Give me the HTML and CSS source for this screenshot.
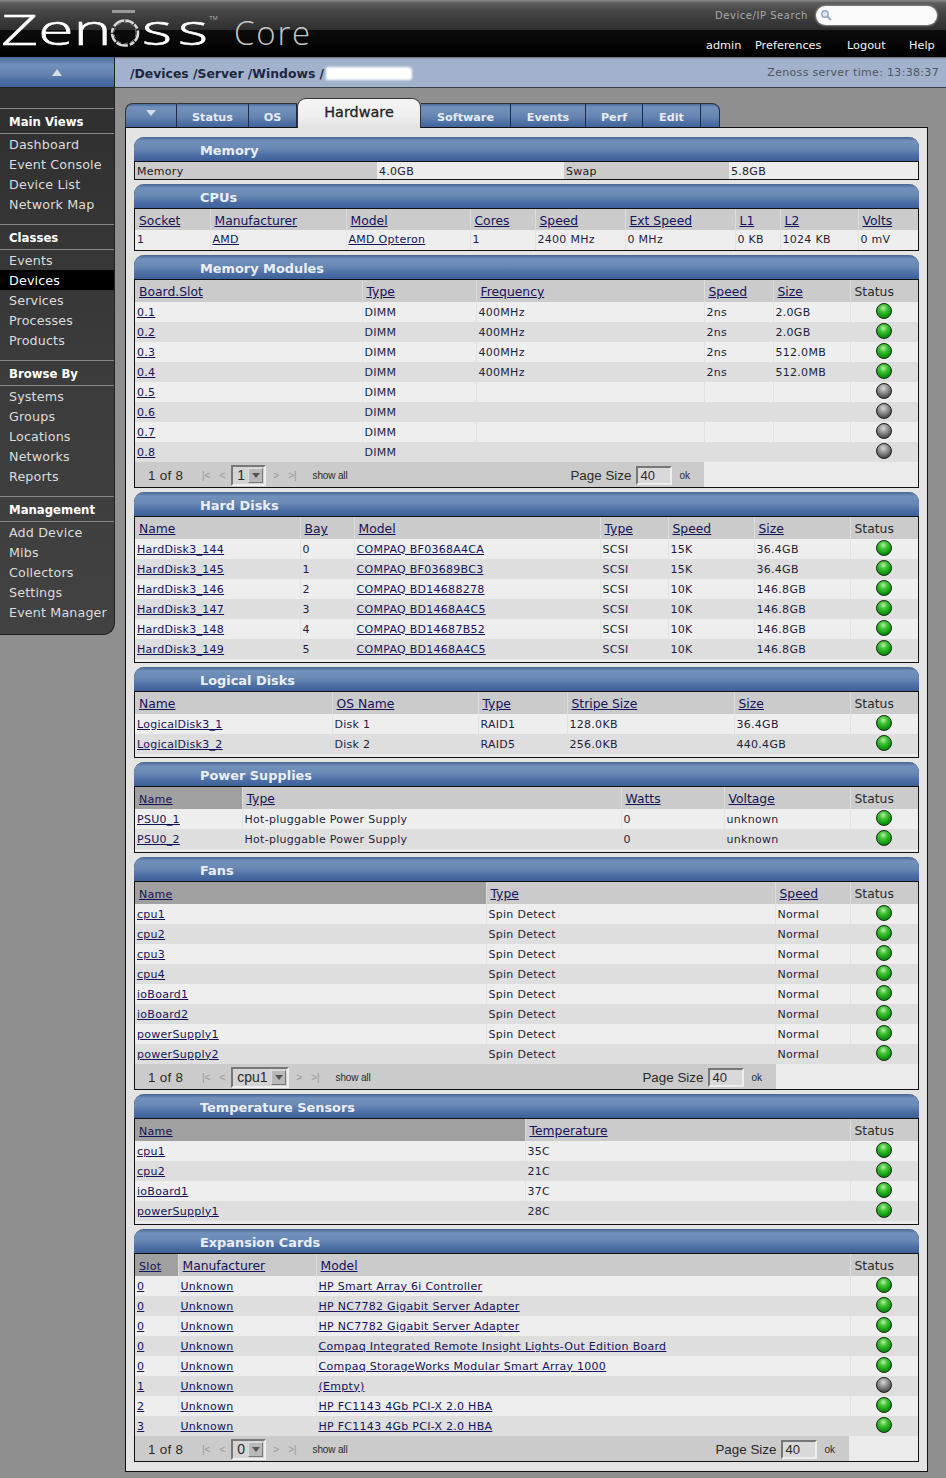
FILE: index.html
```html
<!DOCTYPE html>
<html lang="en">
<head>
<meta charset="utf-8">
<title>Zenoss Core</title>
<link rel="stylesheet" href="styles.css">
</head>
<body>
<header class="top">
  <div class="logo">
    <span class="zen">Zen<span class="zen-o">o</span><span class="zen-s">ss</span></span>
    <svg class="ring" width="34" height="42" viewBox="0 0 34 42"><rect x="3" y="1" width="23" height="3" fill="#9a9a9a"/><ellipse cx="16" cy="24" rx="13" ry="12.5" fill="none" stroke="#d8d8d8" stroke-width="2.6" stroke-dasharray="9 1 5 2 12 1"/><ellipse cx="16" cy="24" rx="11" ry="10.5" fill="none" stroke="#777" stroke-width="1" stroke-dasharray="4 3"/></svg>
    <sup class="tm">TM</sup>
    <span class="core">Core</span>
  </div>
  <div class="top-right">
    <div class="search"><span class="search-label">Device/IP Search</span><span class="search-box"><svg width="12" height="12" viewBox="0 0 12 12"><circle cx="5" cy="5" r="3.2" fill="#dde6f2" stroke="#8fa6c4" stroke-width="1.4"/><path d="M7.5 7.5 11 11" stroke="#8fa6c4" stroke-width="1.8"/></svg></span></div>
    <nav class="user"><a class="u1">admin</a><a class="u2">Preferences</a><a class="u3">Logout</a><a class="u4">Help</a></nav>
  </div>
</header>
<div class="layout">
  <aside class="side">
    <div class="side-top"><span class="tri-up"></span></div>
    <div class="side-body">
      <h3>Main Views</h3>
      <ul><li>Dashboard</li><li>Event Console</li><li>Device List</li><li>Network Map</li></ul>
      <h3>Classes</h3>
      <ul><li>Events</li><li class="on">Devices</li><li>Services</li><li>Processes</li><li>Products</li></ul>
      <h3>Browse By</h3>
      <ul><li>Systems</li><li>Groups</li><li>Locations</li><li>Networks</li><li>Reports</li></ul>
      <h3>Management</h3>
      <ul><li>Add Device</li><li>Mibs</li><li>Collectors</li><li>Settings</li><li>Event Manager</li></ul>
    </div>
  </aside>
  <main class="main">
    <div class="crumb"><span class="path">/Devices /Server /Windows /</span><span class="smudge"></span><span class="time">Zenoss server time: 13:38:37</span></div>
    <div class="tabs">
      <span class="tab t0"><span class="tri-down"></span></span>
      <span class="tab t1">Status</span>
      <span class="tab t2">OS</span>
      <span class="tab active">Hardware</span>
      <span class="tab t4">Software</span>
      <span class="tab t5">Events</span>
      <span class="tab t6">Perf</span>
      <span class="tab t7">Edit</span>
      <span class="tab t8"></span>
    </div>
    <div class="panel">

      <section class="box">
        <h2>Memory</h2>
        <div class="mem"><span class="lab m1">Memory</span><span class="m2">4.0GB</span><span class="lab m3">Swap</span><span class="m4">5.8GB</span></div>
      </section>

      <section class="box">
        <h2>CPUs</h2>
        <table class="cpu">
          <thead><tr><th class="c1"><a>Socket</a></th><th class="c2"><a>Manufacturer</a></th><th class="c3"><a>Model</a></th><th class="c4"><a>Cores</a></th><th class="c5"><a>Speed</a></th><th class="c6"><a>Ext Speed</a></th><th class="c7"><a>L1</a></th><th class="c8"><a>L2</a></th><th><a>Volts</a></th></tr></thead>
          <tbody><tr><td>1</td><td><a>AMD</a></td><td><a>AMD Opteron</a></td><td>1</td><td>2400 MHz</td><td>0 MHz</td><td>0 KB</td><td>1024 KB</td><td>0 mV</td></tr></tbody>
        </table>
      </section>

      <section class="box">
        <h2>Memory Modules</h2>
        <table class="mods">
          <thead><tr><th class="c1"><a>Board.Slot</a></th><th class="c2"><a>Type</a></th><th class="c3"><a>Frequency</a></th><th class="c4"><a>Speed</a></th><th class="c5"><a>Size</a></th><th class="st">Status</th></tr></thead>
          <tbody>
            <tr><td><a>0.1</a></td><td>DIMM</td><td>400MHz</td><td>2ns</td><td>2.0GB</td><td class="st"><span class="ball"></span></td></tr>
            <tr><td><a>0.2</a></td><td>DIMM</td><td>400MHz</td><td>2ns</td><td>2.0GB</td><td class="st"><span class="ball"></span></td></tr>
            <tr><td><a>0.3</a></td><td>DIMM</td><td>400MHz</td><td>2ns</td><td>512.0MB</td><td class="st"><span class="ball"></span></td></tr>
            <tr><td><a>0.4</a></td><td>DIMM</td><td>400MHz</td><td>2ns</td><td>512.0MB</td><td class="st"><span class="ball"></span></td></tr>
            <tr><td><a>0.5</a></td><td>DIMM</td><td></td><td></td><td></td><td class="st"><span class="ball off"></span></td></tr>
            <tr><td><a>0.6</a></td><td>DIMM</td><td></td><td></td><td></td><td class="st"><span class="ball off"></span></td></tr>
            <tr><td><a>0.7</a></td><td>DIMM</td><td></td><td></td><td></td><td class="st"><span class="ball off"></span></td></tr>
            <tr><td><a>0.8</a></td><td>DIMM</td><td></td><td></td><td></td><td class="st"><span class="ball off"></span></td></tr>
          </tbody>
        </table>
        <div class="pager p-mods">
          <span class="count">1 of 8</span><span class="nav"><i>|&lt;</i><i>&lt;</i></span><span class="sel s-short"><b>1</b><em></em></span><span class="nav"><i>&gt;</i><i>&gt;|</i></span><span class="all">show all</span>
          <span class="size">Page Size<span class="inp">40</span><span class="ok">ok</span></span>
        </div>
      </section>

      <section class="box pad">
        <h2>Hard Disks</h2>
        <table class="disks">
          <thead><tr><th class="c1"><a>Name</a></th><th class="c2"><a>Bay</a></th><th class="c3"><a>Model</a></th><th class="c4"><a>Type</a></th><th class="c5"><a>Speed</a></th><th class="c6"><a>Size</a></th><th class="st">Status</th></tr></thead>
          <tbody>
            <tr><td><a>HardDisk3_144</a></td><td>0</td><td><a>COMPAQ BF0368A4CA</a></td><td>SCSI</td><td>15K</td><td>36.4GB</td><td class="st"><span class="ball"></span></td></tr>
            <tr><td><a>HardDisk3_145</a></td><td>1</td><td><a>COMPAQ BF03689BC3</a></td><td>SCSI</td><td>15K</td><td>36.4GB</td><td class="st"><span class="ball"></span></td></tr>
            <tr><td><a>HardDisk3_146</a></td><td>2</td><td><a>COMPAQ BD14688278</a></td><td>SCSI</td><td>10K</td><td>146.8GB</td><td class="st"><span class="ball"></span></td></tr>
            <tr><td><a>HardDisk3_147</a></td><td>3</td><td><a>COMPAQ BD1468A4C5</a></td><td>SCSI</td><td>10K</td><td>146.8GB</td><td class="st"><span class="ball"></span></td></tr>
            <tr><td><a>HardDisk3_148</a></td><td>4</td><td><a>COMPAQ BD14687B52</a></td><td>SCSI</td><td>10K</td><td>146.8GB</td><td class="st"><span class="ball"></span></td></tr>
            <tr><td><a>HardDisk3_149</a></td><td>5</td><td><a>COMPAQ BD1468A4C5</a></td><td>SCSI</td><td>10K</td><td>146.8GB</td><td class="st"><span class="ball"></span></td></tr>
          </tbody>
        </table>
      </section>

      <section class="box pad">
        <h2>Logical Disks</h2>
        <table class="logical">
          <thead><tr><th class="c1"><a>Name</a></th><th class="c2"><a>OS Name</a></th><th class="c3"><a>Type</a></th><th class="c4"><a>Stripe Size</a></th><th class="c5"><a>Size</a></th><th class="st">Status</th></tr></thead>
          <tbody>
            <tr><td><a>LogicalDisk3_1</a></td><td>Disk 1</td><td>RAID1</td><td>128.0KB</td><td>36.4GB</td><td class="st"><span class="ball"></span></td></tr>
            <tr><td><a>LogicalDisk3_2</a></td><td>Disk 2</td><td>RAID5</td><td>256.0KB</td><td>440.4GB</td><td class="st"><span class="ball"></span></td></tr>
          </tbody>
        </table>
      </section>

      <section class="box pad">
        <h2>Power Supplies</h2>
        <table class="power">
          <thead><tr><th class="c1 sorted"><a>Name</a></th><th class="c2"><a>Type</a></th><th class="c3"><a>Watts</a></th><th class="c4"><a>Voltage</a></th><th class="st">Status</th></tr></thead>
          <tbody>
            <tr><td><a>PSU0_1</a></td><td>Hot-pluggable Power Supply</td><td>0</td><td>unknown</td><td class="st"><span class="ball"></span></td></tr>
            <tr><td><a>PSU0_2</a></td><td>Hot-pluggable Power Supply</td><td>0</td><td>unknown</td><td class="st"><span class="ball"></span></td></tr>
          </tbody>
        </table>
      </section>

      <section class="box">
        <h2>Fans</h2>
        <table class="fans">
          <thead><tr><th class="c1 sorted"><a>Name</a></th><th class="c2"><a>Type</a></th><th class="c3"><a>Speed</a></th><th class="st">Status</th></tr></thead>
          <tbody>
            <tr><td><a>cpu1</a></td><td>Spin Detect</td><td>Normal</td><td class="st"><span class="ball"></span></td></tr>
            <tr><td><a>cpu2</a></td><td>Spin Detect</td><td>Normal</td><td class="st"><span class="ball"></span></td></tr>
            <tr><td><a>cpu3</a></td><td>Spin Detect</td><td>Normal</td><td class="st"><span class="ball"></span></td></tr>
            <tr><td><a>cpu4</a></td><td>Spin Detect</td><td>Normal</td><td class="st"><span class="ball"></span></td></tr>
            <tr><td><a>ioBoard1</a></td><td>Spin Detect</td><td>Normal</td><td class="st"><span class="ball"></span></td></tr>
            <tr><td><a>ioBoard2</a></td><td>Spin Detect</td><td>Normal</td><td class="st"><span class="ball"></span></td></tr>
            <tr><td><a>powerSupply1</a></td><td>Spin Detect</td><td>Normal</td><td class="st"><span class="ball"></span></td></tr>
            <tr><td><a>powerSupply2</a></td><td>Spin Detect</td><td>Normal</td><td class="st"><span class="ball"></span></td></tr>
          </tbody>
        </table>
        <div class="pager p-fans">
          <span class="count">1 of 8</span><span class="nav"><i>|&lt;</i><i>&lt;</i></span><span class="sel s-long"><b>cpu1</b><em></em></span><span class="nav"><i>&gt;</i><i>&gt;|</i></span><span class="all">show all</span>
          <span class="size">Page Size<span class="inp">40</span><span class="ok">ok</span></span>
        </div>
      </section>

      <section class="box pad">
        <h2>Temperature Sensors</h2>
        <table class="temp">
          <thead><tr><th class="c1 sorted"><a>Name</a></th><th class="c2"><a>Temperature</a></th><th class="st">Status</th></tr></thead>
          <tbody>
            <tr><td><a>cpu1</a></td><td>35C</td><td class="st"><span class="ball"></span></td></tr>
            <tr><td><a>cpu2</a></td><td>21C</td><td class="st"><span class="ball"></span></td></tr>
            <tr><td><a>ioBoard1</a></td><td>37C</td><td class="st"><span class="ball"></span></td></tr>
            <tr><td><a>powerSupply1</a></td><td>28C</td><td class="st"><span class="ball"></span></td></tr>
          </tbody>
        </table>
      </section>

      <section class="box">
        <h2>Expansion Cards</h2>
        <table class="cards">
          <thead><tr><th class="c1 sorted"><a>Slot</a></th><th class="c2"><a>Manufacturer</a></th><th class="c3"><a>Model</a></th><th class="st">Status</th></tr></thead>
          <tbody>
            <tr><td><a>0</a></td><td><a>Unknown</a></td><td><a>HP Smart Array 6i Controller</a></td><td class="st"><span class="ball"></span></td></tr>
            <tr><td><a>0</a></td><td><a>Unknown</a></td><td><a>HP NC7782 Gigabit Server Adapter</a></td><td class="st"><span class="ball"></span></td></tr>
            <tr><td><a>0</a></td><td><a>Unknown</a></td><td><a>HP NC7782 Gigabit Server Adapter</a></td><td class="st"><span class="ball"></span></td></tr>
            <tr><td><a>0</a></td><td><a>Unknown</a></td><td><a>Compaq Integrated Remote Insight Lights-Out Edition Board</a></td><td class="st"><span class="ball"></span></td></tr>
            <tr><td><a>0</a></td><td><a>Unknown</a></td><td><a>Compaq StorageWorks Modular Smart Array 1000</a></td><td class="st"><span class="ball"></span></td></tr>
            <tr><td><a>1</a></td><td><a>Unknown</a></td><td><a>(Empty)</a></td><td class="st"><span class="ball off"></span></td></tr>
            <tr><td><a>2</a></td><td><a>Unknown</a></td><td><a>HP FC1143 4Gb PCI-X 2.0 HBA</a></td><td class="st"><span class="ball"></span></td></tr>
            <tr><td><a>3</a></td><td><a>Unknown</a></td><td><a>HP FC1143 4Gb PCI-X 2.0 HBA</a></td><td class="st"><span class="ball"></span></td></tr>
          </tbody>
        </table>
        <div class="pager p-cards">
          <span class="count">1 of 8</span><span class="nav"><i>|&lt;</i><i>&lt;</i></span><span class="sel s-short"><b>0</b><em></em></span><span class="nav"><i>&gt;</i><i>&gt;|</i></span><span class="all">show all</span>
          <span class="size">Page Size<span class="inp">40</span><span class="ok">ok</span></span>
        </div>
      </section>

    </div>
  </main>
</div>
</body>
</html>
```
FILE: styles.css
```css
* { box-sizing: border-box; }
html, body { margin: 0; padding: 0; }
body {
  width: 946px;
  height: 1478px;
  overflow: hidden;
  background: #8f8f8f;
  font-family: "DejaVu Sans", Verdana, sans-serif;
  font-size: 11px;
  color: #1e1e3c;
}

/* Header */
.top {
  height: 57px;
  display: flex;
  justify-content: space-between;
  background: linear-gradient(#8a8a8a 0, #5c5c5c 3px, #454545 12px, #2e2e2e 30px, #0c0c0c 30px, #000 57px);
  position: relative;
}
.logo { position: relative; width: 330px; height: 57px; }
.zen {
  position: absolute; left: 1px; top: 6px;
  font-family: "Open Sans", sans-serif; font-weight: 300; font-size: 43px; line-height: 46px;
  color: #fff;
  -webkit-text-stroke: .55px #fff;
  transform: scaleX(1.5); transform-origin: left;
}
.zen-o { color: transparent; -webkit-text-stroke: 0; letter-spacing: -5px; }
.zen-s { letter-spacing: 4px; }
.ring { position: absolute; left: 109px; top: 9px; }
.tm { position: absolute; left: 209px; top: 14px; margin: 0; font-size: 6px; line-height: 8px; color: #aaa; font-family: "Liberation Sans", sans-serif; }
.core {
  position: absolute; left: 234px; top: 13px;
  font-family: "Open Sans", sans-serif; font-weight: 300; font-size: 33px; line-height: 40px; color: #c4c4c4;
  letter-spacing: 1.8px;
}
.top-right { width: 232px; display: flex; flex-direction: column; }
.search { display: flex; align-items: center; height: 30px; padding-left: 1px; padding-top: 0; }
.search-label { width: 101px; color: #a8a8a8; font-size: 10px; letter-spacing: .55px; white-space: nowrap; }
.search-box {
  width: 121px; height: 19px; border-radius: 10px; background: #fafafa;
  box-shadow: 0 0 2px 1px #888; padding: 2px 4px; display: flex; align-items: center;
}
.user { position: relative; height: 27px; color: #f4f4f4; font-size: 11.3px; }
.user a { position: absolute; top: 9px; white-space: nowrap; }
.u1 { left: -8px; } .u2 { left: 41px; } .u3 { left: 133px; } .u4 { left: 195px; }

/* Layout */
.layout { display: flex; align-items: flex-start; }
.side { width: 115px; flex: none; }
.side-top {
  height: 31px; display: flex; align-items: center; justify-content: center;
  background: linear-gradient(#4a6a9a 0, #7190bb 8px, #6381ad 18px, #4a6ca3 24px, #3f6199 30px);
  border-right: 1px solid #222;
  border-bottom: 1px solid #222;
}
.tri-up { width: 0; height: 0; border: 5.5px solid transparent; border-top: 0; border-bottom: 7px solid #d8dde6; }
.side-body {
  height: 547px; padding-top: 20px;
  background: linear-gradient(#2f2f2f, #3b3b3b 50%, #424242);
  border-radius: 0 0 12px 0;
  border-right: 1px solid #222;
  border-bottom: 1px solid #222;
  color: #e6e6e6;
}
.side-body h3 {
  margin: 0; height: 26px; padding: 5px 0 0 9px;
  border-top: 1px solid #888; border-bottom: 1px solid #888;
  font-size: 11.7px; line-height: 16px; font-weight: bold; color: #fff;
}
.side-body ul { list-style: none; margin: 0 0 10px; padding: 0; }
.side-body li { height: 20px; padding-left: 9px; font-size: 12.7px; letter-spacing: .15px; line-height: 22px; white-space: nowrap; color: #dcdcdc; }
.side-body li.on { background: #000; color: #fff; }

/* Breadcrumb */
.main { flex: 1; min-width: 0; }
.crumb {
  height: 31px; display: flex; align-items: center; padding: 0 7px 0 15px;
  background: #a2b2cc;
  border-bottom: 1px solid #3a3f48;
  box-shadow: inset 0 3px 2px -2px #666;
}
.path { font-weight: bold; font-size: 12.4px; padding-top: 2px; color: #1d2740; white-space: nowrap; }
.smudge { width: 86px; height: 13px; margin: 3px 0 0 2px; background: #fff; border-radius: 2px 4px 3px 1px; filter: blur(1px); }
.time { margin-left: auto; font-size: 11px; letter-spacing: .32px; color: #4f5561; white-space: nowrap; }

/* Tabs */
.tabs { display: flex; align-items: flex-end; height: 39px; padding: 0 0 0 10px; }
.tab {
  height: 24px; display: flex; align-items: center; justify-content: center;
  background: linear-gradient(#4a6a9a 0, #7190bb 3px, #6786b1 12px, #4a6ca3 20px, #3f6199 24px);
  border-top: 1px solid #333; border-right: 1px solid #1d2b44;
  color: #e6ebf2; font-weight: bold; font-size: 11.2px; padding-top: 3px;
  margin-bottom: 0;
}
.t0 { width: 52px; border-left: 1px solid #333; border-radius: 8px 0 0 0; padding-top: 0; padding-bottom: 1px; }
.t1 { width: 72px; } .t2 { width: 48px; }
.t4 { width: 90px; } .t5 { width: 75px; } .t6 { width: 57px; } .t7 { width: 58px; }
.t8 { width: 19px; border-radius: 0 8px 0 0; }
.tab.active {
  width: 124px; height: 30px; padding: 0 0 4px; position: relative; top: 1px;
  background: linear-gradient(#f4f4f4, #f0f0f0 55%, #e2e2e2);
  border: 1px solid #333; border-bottom: 0; border-radius: 9px 9px 0 0;
  color: #222; font-weight: normal; font-size: 14.4px; letter-spacing: 0;
  -webkit-text-stroke: .3px #222;
}
.tri-down { width: 0; height: 0; border: 5.5px solid transparent; border-bottom: 0; border-top: 6px solid #d8dde6; margin-bottom: 5px; }

/* Panel */
.panel {
  width: 803px; margin-left: 10px;
  padding: 9px 8px 9px;
  background: #e4e4e4;
  border: 1px solid #111;
  display: flex; flex-direction: column; gap: 4px;
}
.box {
  width: 785px; border: 1px solid #111; border-top: 0; border-radius: 10px 10px 0 0;
  background: #ebebeb;
}
.box.pad { padding-bottom: 3px; }
.box h2 {
  margin: 0 -1px; height: 25px; padding: 3px 0 0 66px;
  font-size: 12.9px; line-height: 22px; font-weight: bold; color: #eaeff6;
  background: linear-gradient(#45648f 0, #7190bb 4px, #6a89b4 11px, #4d6fa6 18px, #3e6099 24px, #111 24px, #111 25px);
  border-radius: 10px 10px 0 0;
}

/* Memory row */
.mem { display: flex; height: 17px; line-height: 19px; background: #ececec; letter-spacing: .28px; }
.mem .lab { background: #cbcbcb; }
.mem span { padding-left: 2px; color: #222; }
.m1 { width: 242px; } .m2 { width: 187px; } .m3 { width: 165px; } .m4 { flex: 1; }

/* Tables */
table { width: 783px; table-layout: fixed; border-collapse: collapse; }
th {
  height: 22px; padding: 2px 0 0 4px; text-align: left; font-weight: normal;
  font-size: 12.35px; background: #cbcbcb; color: #2a2a2a;
  border-left: 1px solid #dcdcdc; white-space: nowrap;
}
th:first-child { border-left: 0; }
th a, td a { color: #14145a; text-decoration: underline; }
td {
  height: 20px; padding: 0 0 0 2px; font-size: 11px; letter-spacing: .28px;
  border-left: 1px solid #e2e2e2; white-space: nowrap; overflow: hidden;
}
td:first-child { border-left: 0; }
tbody tr:nth-child(odd) { background: #eeeeee; }
tbody tr:nth-child(even) { background: #dedede; }
tbody tr:nth-child(even) td { border-left-color: #dedede; }
th.sorted { background: #a0a0a0; font-size: 11px; letter-spacing: .3px; }
td.st { padding: 0; text-align: center; }
.cpu th { height: 21px; }
.cpu td { padding-bottom: 2px; }
.ball {
  display: block; width: 16px; height: 16px; margin: -2px auto 0; border-radius: 50%;
  background: radial-gradient(circle at 45% 30%, #b9f0a8 0, #43c535 30%, #0e9a10 65%, #065c08 100%);
  border: 1px solid #1b2b1b;
}
.ball.off { background: radial-gradient(circle at 45% 30%, #d8d8d8 0, #8c8c8c 40%, #555 70%, #333 100%); border-color: #222; }

.cpu .c1 { width: 75px; } .cpu .c2 { width: 136px; } .cpu .c3 { width: 124px; } .cpu .c4 { width: 65px; }
.cpu .c5 { width: 90px; } .cpu .c6 { width: 110px; } .cpu .c7 { width: 45px; } .cpu .c8 { width: 78px; }
.mods .c1 { width: 227px; } .mods .c2 { width: 114px; } .mods .c3 { width: 228px; } .mods .c4 { width: 69px; } .mods .c5 { width: 77px; }
.disks .c1 { width: 165px; } .disks .c2 { width: 54px; } .disks .c3 { width: 246px; } .disks .c4 { width: 68px; } .disks .c5 { width: 86px; } .disks .c6 { width: 96px; }
.logical .c1 { width: 197px; } .logical .c2 { width: 146px; } .logical .c3 { width: 89px; } .logical .c4 { width: 167px; } .logical .c5 { width: 116px; }
.power .c1 { width: 107px; } .power .c2 { width: 379px; } .power .c3 { width: 103px; } .power .c4 { width: 126px; }
.fans .c1 { width: 351px; } .fans .c2 { width: 289px; } .fans .c3 { width: 75px; }
.temp .c1 { width: 390px; } .temp .c2 { width: 325px; }
.cards .c1 { width: 43px; } .cards .c2 { width: 138px; } .cards .c3 { width: 534px; }
th.st { width: 68px; }

/* Pager */
.pager {
  height: 25px; display: flex; align-items: center; padding: 1px 14px 0 13px;
  background: #cbcbcb;
  font-family: "Liberation Sans", Arial, sans-serif; font-size: 13px; color: #2a2a2a;
}
.p-mods { width: 569px; } .p-fans { width: 641px; } .p-cards { width: 714px; }
.count { width: 54px; font-size: 13.4px; letter-spacing: .3px; }
.nav { display: flex; gap: 9px; color: #9a9a9a; font-size: 10px; }
.nav i { font-style: normal; }
.nav:first-of-type { width: 28px; }
.sel {
  margin: 0 7px 0 6px; height: 21px; display: flex; align-items: center; justify-content: space-between;
  background: #d4d4d4; border: 2px solid #777; border-right-color: #eee; border-bottom-color: #eee;
  padding: 0 1px 0 4px; font-size: 14px;
}
.sel b { font-weight: normal; }
.sel em { width: 15px; height: 15px; background: #b9b9b9; border: 1px solid #ddd; border-right-color: #777; border-bottom-color: #777; position: relative; display: block; }
.sel em::after { content: ""; position: absolute; left: 3px; top: 4px; border: 4px solid transparent; border-top: 5px solid #555; border-bottom: 0; }
.s-short { width: 35px; } .s-long { width: 58px; }
.all { margin-left: 16px; font-size: 10px; letter-spacing: -.15px; }
.size { margin-left: auto; display: flex; align-items: center; font-size: 13.4px; white-space: nowrap; }
.inp {
  width: 36px; height: 19px; margin-left: 5px; padding-left: 2px; line-height: 16px;
  background: #d9d9d9; border: 2px solid #777; border-right-color: #eee; border-bottom-color: #eee; font-size: 13px;
}
.ok { margin-left: 7px; font-size: 10px; }
```
